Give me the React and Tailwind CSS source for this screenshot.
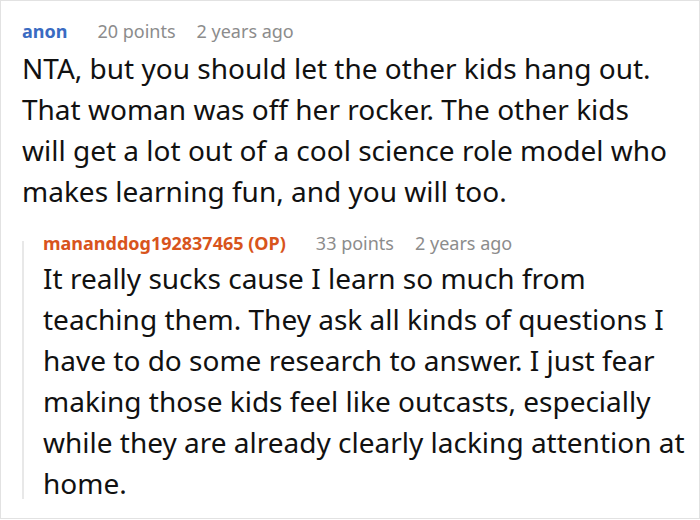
import React from 'react';

const Meta = ({ name, nameClass, points, age }) => (
  <div className="flex items-center text-[18px] leading-[24px]">
    <span className={`font-bold ${nameClass}`}>{name}</span>
    <span className="ml-[30px] text-[#8c8c8c]">{points}</span>
    <span className="ml-[21px] text-[#8c8c8c]">{age}</span>
  </div>
);

export default function App() {
  return (
    <div className="w-[700px] h-[520px] bg-white overflow-hidden" style={{ fontFamily: '"Noto Sans", "Open Sans", sans-serif' }}>
      <div className="h-[519px] border border-[#e2e2e2] pl-[21px] pr-[12px] pt-[18px] text-[#111]">
        <Meta name="anon" nameClass="text-[#3a6bc2]" points="20 points" age="2 years ago" />
        <p className="mt-[5px] pr-[10px] text-[28px] leading-[41px]">
          NTA, but you should let the other kids hang out. That woman was off her rocker. The other kids will get a lot out of a cool science role model who makes learning fun, and you will too.
        </p>
        <div className="mt-[19px] flex">
          <div className="w-[2px] shrink-0 bg-[#e8e8e8] mt-[10px] mb-[5px]" />
          <div className="pl-[19px]">
            <Meta name="mananddog192837465 (OP)" nameClass="text-[#d8541c]" points="33 points" age="2 years ago" />
            <p className="mt-[3px] text-[28px] leading-[41px]">
              It really sucks cause I learn so much from teaching them. They ask all kinds of questions I have to do some research to answer. I just fear making those kids feel like outcasts, especially while they are already clearly lacking attention at home.
            </p>
          </div>
        </div>
      </div>
    </div>
  );
}
